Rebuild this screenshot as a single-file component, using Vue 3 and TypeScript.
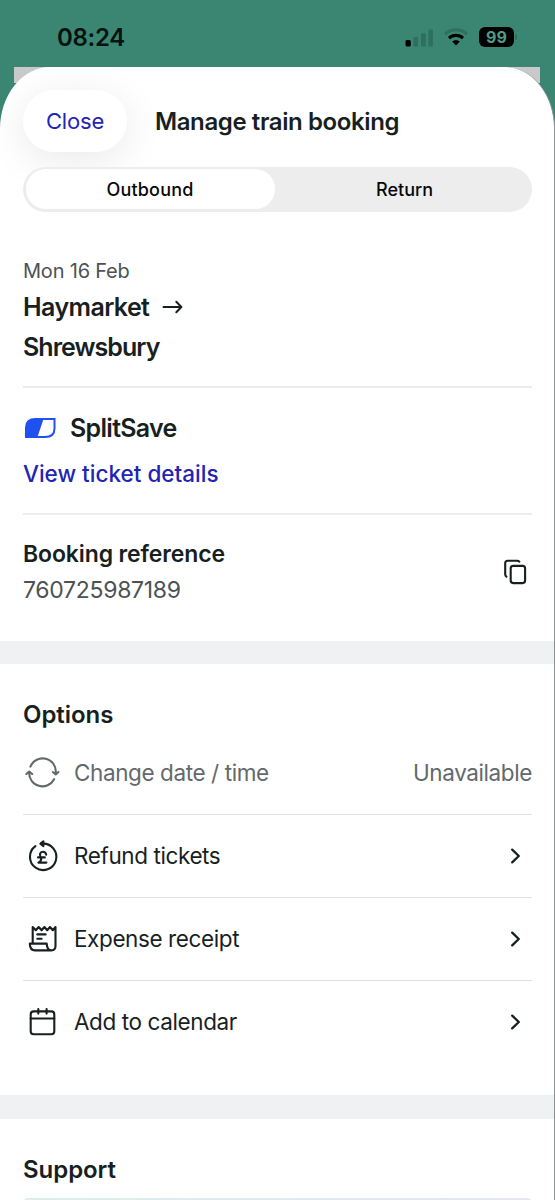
<script setup lang="ts">
import { ref } from 'vue'

type IconName = 'change' | 'refund' | 'receipt' | 'calendar'

interface Option {
  icon: IconName
  label: string
  status?: string
}

const legs = ['Outbound', 'Return']
const activeLeg = ref(0)

const options: Option[] = [
  { icon: 'change', label: 'Change date / time', status: 'Unavailable' },
  { icon: 'refund', label: 'Refund tickets' },
  { icon: 'receipt', label: 'Expense receipt' },
  { icon: 'calendar', label: 'Add to calendar' },
]
</script>

<template>
  <div class="screen">
    <div class="status-bar">
      <span class="clock">08:24</span>
      <div class="indicators">
        <svg class="signal" width="29" height="19" viewBox="0 0 29 19">
          <rect x="0.5" y="12" width="5.3" height="6.5" rx="1.5" fill="#000" />
          <rect x="8.3" y="9" width="4.8" height="9.5" rx="1.3" fill="#2f6f5f" />
          <rect x="16" y="5.2" width="4.8" height="13.3" rx="1.3" fill="#2f6f5f" />
          <rect x="23.5" y="1.5" width="4.5" height="17" rx="1.3" fill="#2f6f5f" />
        </svg>
        <svg class="wifi" width="24" height="18" viewBox="0 0 24 18">
          <path d="M1.2 6.2C7.2 .4 16.8 .4 22.8 6.2" fill="none" stroke="#2f6f5f" stroke-width="3" />
          <path d="M5 10.2C9 6.5 15 6.5 19 10.2" fill="none" stroke="#000" stroke-width="3.2" />
          <path d="M8.2 13.6C10.4 11.7 13.6 11.7 15.8 13.6L12 17.5Z" fill="#000" />
        </svg>
        <div class="battery"><span>99</span></div>
        <i class="battery-tip"></i>
      </div>
    </div>

    <div class="backdrop">
      <main class="sheet">
        <header class="top">
          <button class="close" type="button">Close</button>
          <h1 class="title">Manage train booking</h1>
        </header>

        <div class="segments">
          <button
            v-for="(leg, i) in legs"
            :key="leg"
            type="button"
            class="segment"
            :class="{ active: i === activeLeg }"
            @click="activeLeg = i"
          >{{ leg }}</button>
        </div>

        <section class="journey">
          <p class="date">Mon 16 Feb</p>
          <h2 class="place">
            <span class="from">Haymarket</span>
            <svg width="22" height="16" viewBox="0 0 22 16">
              <path d="M1.5 8H19.2M14.3 2.8L19.4 8L14.3 13.2" fill="none" stroke="#181f1f" stroke-width="2" stroke-linecap="round" stroke-linejoin="round" />
            </svg>
          </h2>
          <h2 class="place to">Shrewsbury</h2>
        </section>

        <section class="split">
          <div class="split-name">
            <svg width="32" height="22" viewBox="0 0 32 22">
              <path d="M2 20V10.5Q2 2 11.5 2H30.5V11.5Q30.5 20 21 20Z" fill="none" stroke="#1f50f0" stroke-width="2" />
              <path d="M2 20V10.5Q2 2 11.5 2H19.5L13.5 20Z" fill="#1f50f0" />
            </svg>
            <span>SplitSave</span>
          </div>
          <a class="details">View ticket details</a>
        </section>

        <section class="reference">
          <div>
            <h3 class="ref-title">Booking reference</h3>
            <p class="ref-number">760725987189</p>
          </div>
          <svg class="copy" width="24" height="27" viewBox="0 0 24 27">
            <path d="M3.4 18.6Q2.2 17.9 2.2 16.3V5.2Q2.2 2.7 4.7 2.7H14Q15.6 2.7 16.3 3.6" fill="none" stroke="#181f1f" stroke-width="2.1" stroke-linecap="round" />
            <rect x="7.7" y="7.9" width="14.4" height="17.2" rx="2.5" fill="none" stroke="#181f1f" stroke-width="2.1" />
          </svg>
        </section>

        <div class="band"></div>

        <section class="options">
          <h3 class="heading">Options</h3>
          <ul>
            <li v-for="option in options" :key="option.icon" :class="{ muted: option.status }">
              <svg class="icon" width="38" height="38" viewBox="0 0 38 38">
                <g v-if="option.icon === 'change'">
                  <path d="M6.4 12.6A13.2 13.2 0 0 1 31.7 19.4M30.1 25.2A13.2 13.2 0 0 1 5.2 18.2" />
                  <path d="M28.9 18L31.7 20.4L34.5 18M2.4 20L5.2 17.6L8.2 20" />
                </g>
                <g v-else-if="option.icon === 'refund'">
                  <path d="M11.4 9.2A13.2 13.2 0 1 0 18.4 6.7H17" />
                  <path d="M19.4 4.4L16.4 6.7L19.4 9.1Z" fill="currentColor" />
                  <path d="M22.2 17.6C21.8 15.5 20.4 14.8 18.8 14.8C15.8 14.8 15.4 17.8 16.6 20C17.7 22.2 17.2 24.2 14.4 25.6H22.4M14 20.4H20.8" />
                </g>
                <g v-else-if="option.icon === 'receipt'">
                  <path d="M8.7 23V7L11.8 10.2L14.7 7L17.6 10.2L20.4 7L23.2 10.2L26 7L28.8 10.2L31.5 7V26Q31.5 30.4 27.2 30.4H11Q6 30.4 5.8 23.6H22.7Q23.1 30.4 27.2 30.4" />
                  <path d="M13.3 14.4H21.6M13.3 18.8H17.6" />
                </g>
                <g v-else>
                  <rect x="6.7" y="8.4" width="23.6" height="22.8" rx="3" />
                  <path d="M6.7 15.5H30.3M14.3 6V10.6M22.6 6V10.6" />
                </g>
              </svg>
              <span class="label">{{ option.label }}</span>
              <span v-if="option.status" class="status">{{ option.status }}</span>
              <svg v-else class="chevron" width="12" height="18" viewBox="0 0 12 18">
                <path d="M2.2 2.6L8.8 9L2.2 15.4" fill="none" stroke="#181f1f" stroke-width="2.3" stroke-linecap="round" stroke-linejoin="round" />
              </svg>
            </li>
          </ul>
        </section>

        <div class="band second"></div>

        <section class="support">
          <h3 class="heading">Support</h3>
          <div class="support-card"></div>
        </section>
      </main>
    </div>
  </div>
</template>

<style>
body {
  overflow: hidden;
}
</style>

<style scoped>
.screen {
  width: 555px;
  height: 1200px;
  overflow: hidden;
  box-sizing: border-box;
  background: #3b8573;
  color: #181f1f;
  font-family: Inter, "Liberation Sans", sans-serif;
}
h1, h2, h3, p, ul {
  margin: 0;
  padding: 0;
}
button {
  border: 0;
  padding: 0;
  font-family: inherit;
  color: inherit;
}
.status-bar {
  height: 67px;
  box-sizing: border-box;
  padding: 23px 38px 0 57px;
  display: flex;
  justify-content: space-between;
}
.clock {
  color: #06120f;
  font-size: 24px;
  line-height: 29px;
  font-weight: 600;
  letter-spacing: -0.3px;
}
.indicators {
  height: 28px;
  display: flex;
  align-items: center;
}
.wifi {
  margin-left: 10px;
}
.battery {
  width: 35px;
  height: 20px;
  margin-left: 11px;
  border-radius: 6px;
  background: #000;
  color: #4c9c88;
  font-size: 16px;
  line-height: 20px;
  font-weight: 700;
  text-align: center;
}
.battery-tip {
  width: 2px;
  height: 6px;
  margin-left: 1px;
  border-radius: 0 2px 2px 0;
  background: #2f6f5f;
}
.backdrop {
  height: 1133px;
  background: linear-gradient(#c9c9c9, #c9c9c9) 14px 0 / 526px 16px no-repeat;
}
.sheet {
  height: 1133px;
  box-sizing: border-box;
  overflow: hidden;
  border-right: 1px solid #8f9292;
  border-radius: 50px 50px 0 0 / 62px 62px 0 0;
  background: #fff;
}
.top {
  height: 99.5px;
  padding: 23px 22px 0 23px;
  box-sizing: border-box;
  display: flex;
}
.close {
  width: 104px;
  height: 62px;
  border-radius: 31px;
  background: #fff;
  box-shadow: 0 8px 42px rgba(0, 0, 0, 0.09);
  color: #2424b4;
  font-size: 22px;
  letter-spacing: -0.2px;
}
.title {
  margin-left: 28px;
  font-size: 24px;
  line-height: 63px;
  font-weight: 600;
  letter-spacing: -0.4px;
  white-space: nowrap;
}
.segments {
  position: relative;
  height: 45px;
  margin: 0 22px 0 23px;
  padding: 2.5px;
  box-sizing: border-box;
  border-radius: 23px;
  background: #ededee;
  display: flex;
}
.segment {
  flex: 1;
  border-radius: 20px;
  background: transparent;
  padding-left: 5px;
  color: #080808;
  font-size: 18px;
  font-weight: 500;
}
.segment.active {
  flex: 0 0 249px;
  padding-left: 0;
  background: #fff;
  letter-spacing: 0.2px;
}
.journey {
  height: 176.5px;
  margin: 0 22px 0 23px;
  padding-top: 46px;
  box-sizing: border-box;
  border-bottom: 2px solid #ececee;
}
.date {
  color: #4c5254;
  font-size: 20px;
  line-height: 26px;
  letter-spacing: -0.2px;
}
.place {
  height: 40px;
  margin-top: 3px;
  display: flex;
  align-items: center;
  font-size: 25px;
  font-weight: 600;
  letter-spacing: -0.6px;
}
.place svg {
  margin-left: 13px;
}
.place.to {
  margin-top: 0;
  letter-spacing: -0.95px;
}
.split {
  height: 127px;
  margin: 0 22px 0 23px;
  padding-top: 24px;
  box-sizing: border-box;
  border-bottom: 2px solid #ececee;
}
.split-name {
  height: 32px;
  padding-left: 1px;
  display: flex;
  align-items: center;
  gap: 14px;
  font-size: 25px;
  font-weight: 600;
  letter-spacing: -0.7px;
}
.details {
  display: block;
  margin-top: 14px;
  color: #2424b4;
  font-size: 22.5px;
  line-height: 31px;
  font-weight: 500;
}
.reference {
  height: 126px;
  padding: 23px 27px 0 23px;
  box-sizing: border-box;
  display: flex;
  justify-content: space-between;
}
.ref-title {
  font-size: 23px;
  line-height: 32px;
  font-weight: 600;
  letter-spacing: -0.12px;
}
.ref-number {
  margin-top: 4px;
  color: #4c5254;
  font-size: 23px;
  line-height: 32px;
  letter-spacing: -0.3px;
}
.copy {
  margin-top: 20px;
}
.band {
  height: 23px;
  background: #f0f1f3;
}
.heading {
  font-size: 24px;
  line-height: 33px;
  font-weight: 600;
  letter-spacing: -0.05px;
}
.options {
  height: 431px;
  padding: 34px 22px 0 23px;
  box-sizing: border-box;
}
.options ul {
  list-style: none;
}
.options li {
  height: 83px;
  box-sizing: border-box;
  display: flex;
  align-items: center;
  border-bottom: 1px solid #dfe1e2;
  font-size: 22.5px;
  letter-spacing: -0.4px;
}
.options li:last-child {
  border-bottom-color: transparent;
}
.options li.muted {
  height: 84px;
  padding-top: 1px;
  color: #63696b;
}
.icon {
  margin-left: 1px;
  margin-right: 12px;
  fill: none;
  stroke: currentColor;
  stroke-width: 2.1;
  stroke-linecap: round;
  stroke-linejoin: round;
}
.label,
.status {
  padding-bottom: 2px;
}
.label {
  flex: 1;
}
.chevron {
  margin-right: 10px;
}
.band.second {
  height: 24px;
}
.support {
  height: 81px;
  padding: 34px 22px 0 23px;
  box-sizing: border-box;
}
.support-card {
  height: 30px;
  margin-top: 12px;
  border-radius: 5px;
  background: linear-gradient(90deg, #d9efea, #e6e5f4);
}
</style>
